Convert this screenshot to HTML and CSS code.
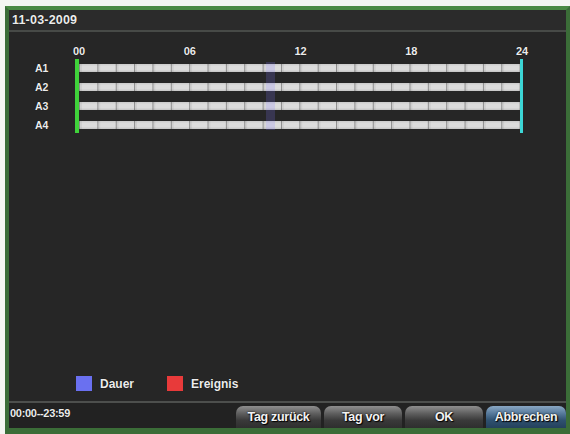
FILE: index.html
```html
<!DOCTYPE html>
<html lang="de">
<head>
<meta charset="utf-8">
<title>Wiedergabe – Suche</title>
<link rel="stylesheet" href="styles.css">
</head>
<body>
<div class="frame">
  <div class="titlebar">11-03-2009</div>
  <div class="main">
    <div class="hours">
      <span>00</span><span>06</span><span>12</span><span>18</span><span>24</span>
    </div>
    <div class="chart">
      <div class="names">
        <span>A1</span><span>A2</span><span>A3</span><span>A4</span>
      </div>
      <div class="tracks">
        <div class="bar"></div>
        <div class="bar"></div>
        <div class="bar"></div>
        <div class="bar"></div>
        <div class="cursor"></div>
      </div>
    </div>
    <div class="legend">
      <span class="swatch blue"></span><span class="legend-label">Dauer</span>
      <span class="swatch red"></span><span class="legend-label">Ereignis</span>
    </div>
  </div>
  <div class="footer">
    <span class="range">00:00--23:59</span>
    <div class="buttons">
      <button class="btn">Tag zurück</button>
      <button class="btn">Tag vor</button>
      <button class="btn">OK</button>
      <button class="btn active">Abbrechen</button>
    </div>
  </div>
</div>
</body>
</html>
```
FILE: styles.css
```css
html, body {
  margin: 0;
  padding: 0;
  background: #f4f6f2;
  width: 570px;
  height: 434px;
  overflow: hidden;
}

.frame {
  box-sizing: border-box;
  margin: 6px 0 0 5px;
  width: 565px;
  height: 428px;
  border: 4px solid #3b6d38;
  border-top-color: #4a8a44;
  border-bottom-width: 6px;
  background: #262626;
  display: flex;
  flex-direction: column;
  font-family: "Liberation Sans", Arial, sans-serif;
  font-weight: bold;
  color: #ececec;
  text-shadow: 0 0 1px #000;
}

.titlebar {
  height: 20px;
  line-height: 20px;
  padding-left: 3px;
  font-size: 12.5px;
  letter-spacing: 0.2px;
  background: #2b2b2b;
  border-bottom: 2px solid #474a47;
}

.main {
  flex: 1;
  display: flex;
  flex-direction: column;
}

.hours {
  display: flex;
  justify-content: space-between;
  width: 461px;
  margin: 13px 0 0 61px;
  font-size: 11px;
  line-height: 12px;
}

.hours span {
  width: 18px;
  text-align: center;
}

.chart {
  display: flex;
  margin-top: 2px;
}

.names {
  width: 40px;
  padding-left: 26px;
  padding-top: 3px;
  display: flex;
  flex-direction: column;
  gap: 7px;
  font-size: 10.5px;
  line-height: 12px;
}

.tracks {
  position: relative;
  width: 441px;
  padding: 5px 0 4px;
  border-left: 4px solid #3fd23a;
  border-right: 3px solid #3cd6d6;
  display: flex;
  flex-direction: column;
  gap: 11px;
}

.bar {
  height: 8px;
  background:
    linear-gradient(to bottom, rgba(0,0,0,0.08), rgba(255,255,255,0) 30%, rgba(255,255,255,0) 70%, rgba(0,0,0,0.1)),
    linear-gradient(to right, #8e8e8e 0 1px, #cfcfcf 1px 3px, #dcdcdc 3px);
  background-size: 100% 100%, calc(100% / 24) 100%;
}

/* current-time marker across all channels */
.cursor {
  position: absolute;
  left: 187px;
  top: 3px;
  bottom: 3px;
  width: 9px;
  background: rgba(130, 120, 255, 0.2);
}

.legend {
  margin-top: auto;
  margin-bottom: 10px;
  display: flex;
  align-items: center;
  padding-left: 67px;
  font-size: 12px;
}

.swatch {
  width: 16px;
  height: 15px;
  margin-right: 8px;
}

.swatch.blue { background: #6a70f0; }
.swatch.red { background: #e83a3a; margin-left: 33px; }

.footer {
  height: 25px;
  border-top: 2px solid #4d4f4d;
  background: #222;
  display: flex;
  align-items: flex-end;
}

.range {
  align-self: flex-start;
  padding: 4px 0 0 1px;
  font-size: 11px;
  letter-spacing: -0.3px;
}

.buttons {
  margin-left: auto;
  display: flex;
  gap: 3px;
}

.btn {
  height: 22px;
  width: 78px;
  border: none;
  border-radius: 7px 7px 0 0;
  padding: 0;
  font-family: "Liberation Sans", Arial, sans-serif;
  font-weight: bold;
  font-size: 12.5px;
  letter-spacing: -0.3px;
  color: #f2f2f2;
  text-shadow: 1px 1px 1px #000, 0 0 2px #000;
  background: linear-gradient(to bottom, #8f8f8f 0%, #5e5e5e 35%, #3a3a3a 65%, #2e2e2e 100%);
}

.btn:first-child { width: 85px; }

.btn.active {
  width: 80px;
  background: linear-gradient(to bottom, #8aa8c4 0%, #55789a 35%, #2f5170 65%, #24415c 100%);
}
```
